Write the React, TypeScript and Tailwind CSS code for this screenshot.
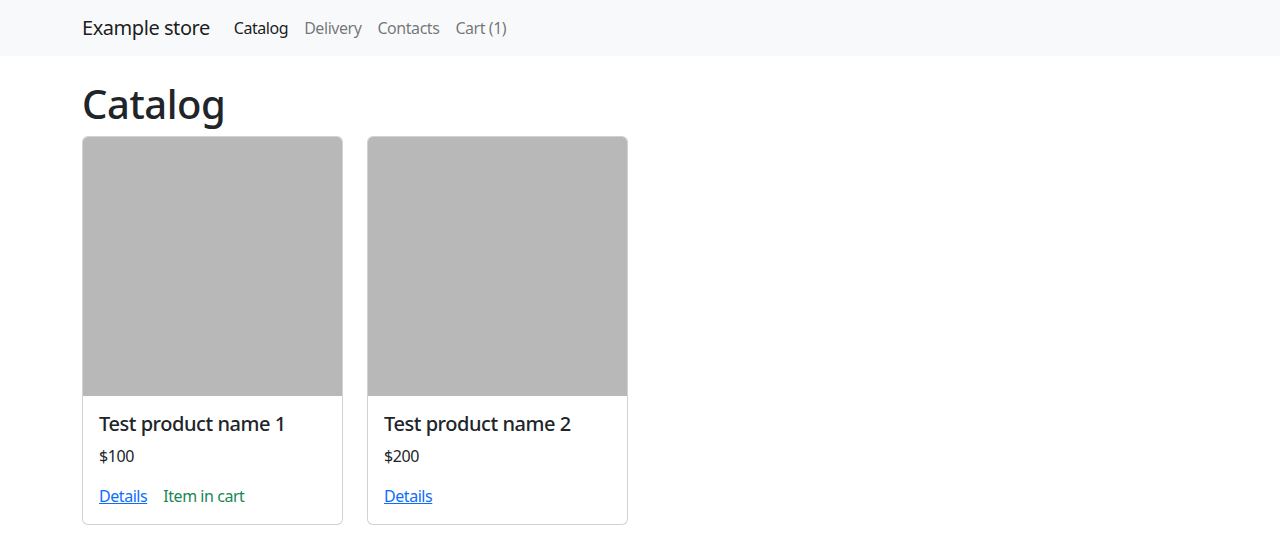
import React from 'react';

type Product = {
  id: number;
  name: string;
  price: number;
  inCart: boolean;
};

const products: Product[] = [
  { id: 1, name: 'Test product name 1', price: 100, inCart: true },
  { id: 2, name: 'Test product name 2', price: 200, inCart: false },
];

const navLinks = [
  { label: 'Catalog', active: true },
  { label: 'Delivery', active: false },
  { label: 'Contacts', active: false },
  { label: 'Cart (1)', active: false },
];

export default function App() {
  return (
    <div className="min-h-screen bg-white text-[#212529] font-['Noto_Sans',sans-serif] tracking-[-0.028em]">
      {/* Navbar */}
      <nav className="bg-[#f8f9fa] py-2">
        <div className="max-w-[1140px] mx-auto px-3 flex items-center">
          <a href="#" className="text-[20px] leading-[30px] py-[5px] mr-4 text-black/90">
            Example store
          </a>
          <ul className="flex">
            {navLinks.map((link) => (
              <li key={link.label}>
                <a
                  href="#"
                  className={`block px-2 py-2 text-base leading-6 ${
                    link.active ? 'text-black/90' : 'text-black/55'
                  }`}
                >
                  {link.label}
                </a>
              </li>
            ))}
          </ul>
        </div>
      </nav>

      {/* Catalog */}
      <main className="max-w-[1140px] mx-auto px-3 pt-6">
        <h1 className="text-[40px] leading-[48px] font-medium mb-2">Catalog</h1>
        <div className="grid grid-cols-4 gap-6">
          {products.map((product) => (
            <div
              key={product.id}
              className="border border-black/[0.175] rounded-md overflow-hidden bg-white"
            >
              <div className="aspect-square bg-[#b8b8b8]" />
              <div className="p-4">
                <h5 className="text-[20px] leading-6 font-medium mb-2">{product.name}</h5>
                <p className="text-base leading-6 mb-4">${product.price}</p>
                <div className="flex gap-4 text-base leading-6">
                  <a href="#" className="text-[#0d6efd] underline">
                    Details
                  </a>
                  {product.inCart && <span className="text-[#198754]">Item in cart</span>}
                </div>
              </div>
            </div>
          ))}
        </div>
      </main>
    </div>
  );
}
